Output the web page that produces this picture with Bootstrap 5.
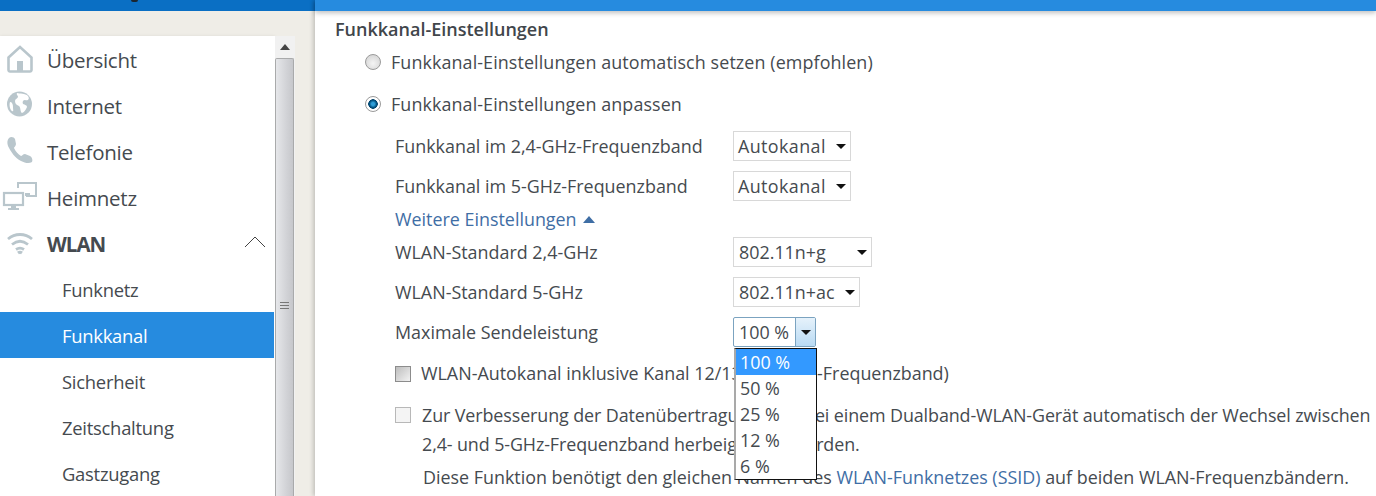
<!DOCTYPE html>
<html lang="de">
<head>
  <meta charset="UTF-8">
  <title>Funkkanal</title>
  <link href="https://cdn.jsdelivr.net/npm/bootstrap@5.3.0/dist/css/bootstrap.min.css" rel="stylesheet">
  <style>
    html, body { height: 496px; overflow: hidden; }
    body { font-family: "Open Sans", "Noto Sans", sans-serif; color: #454a4f; font-size: 17.9px; background: #fff; }
    .shell { height: 496px; }
    .side-col { width: 315px; flex: none; background: #efede7; }
    .side-top { height: 11px; background: #0a6fc4; padding-left: 131px; }
    .logo-bit { display: block; width: 7px; height: 2px; background: #1a2530; border-radius: 0 0 3px 3px; }
    .side-body { height: 485px; padding-top: 25px; }
    .side-menu { width: 275px; background: #fff; box-shadow: 0 0 3px rgba(0,0,0,.08); }
    .side-list { width: 274px; }
    .side-item { height: 46px; font-size: 20.5px; padding: 2px 0 0 47px; letter-spacing: -.25px; position: relative; }
    .side-item svg { position: absolute; left: 2px; top: 6px; width: 36px; height: 34px; }
    .side-item .up-arrow { left: 244px; top: 15px; width: 22px; height: 14px; }
    .side-item.strong-item { letter-spacing: -1px; }
    .side-sub { height: 46px; font-size: 18.4px; padding: 2px 0 0 62px; letter-spacing: -.25px; }
    .side-sub.active-sub { background: #268bdf; color: #fff; }
    .fake-scroll { width: 20px; flex: none; background: #f1f1f1; }
    .scroll-up { height: 22px; }
    .scroll-up i { border: 5px solid transparent; border-top: 0; border-bottom: 6px solid #444; }
    .scroll-thumb { width: 19px; height: 440px; border: 1px solid #a9aaab; border-bottom: 0; background: linear-gradient(90deg, #e6e7ea, #d2d3d7 60%, #c6c7cb); border-radius: 2px 2px 0 0; }
    .scroll-grip { padding-top: 243px; }
    .scroll-grip i { width: 9px; height: 9px; background: repeating-linear-gradient(#777 0 1px, transparent 1px 3px); }
    .main-col { min-width: 0; box-shadow: -2px 0 4px rgba(0,0,0,.18); }
    .main-top { height: 11px; background: #268bdf; box-shadow: 0 2px 5px rgba(0,0,0,.25); }
    .main-body { padding: 7px 0 0 20px; position: relative; white-space: nowrap; }
    .page-head { height: 22px; line-height: 22px; font-size: 18px; font-weight: 600; color: #41464b; }
    .opt-row { height: 42px; padding-left: 30px; gap: 10px; letter-spacing: .1px; }
    .opt-first { margin-top: 1px; }
    .radio-dot { width: 16px; height: 16px; border-radius: 50%; border: 1px solid #9a9a9a; background: radial-gradient(circle at 50% 60%, #f4f4f4, #cfcfcf); flex: none; }
    .radio-dot.on { background: radial-gradient(circle at 50% 50%, #2f9fd8 0 1.5px, #045483 3.5px, #03456c 4.5px, #fff 5px); }
    .set-row { height: 40px; padding-left: 60px; }
    .first-set { margin-top: 1px; }
    .set-label { width: 338px; flex: none; }
    .more-link { height: 26px; padding-left: 60px; color: #3f6ea5; gap: 6px; }
    .more-caret { border: 6px solid transparent; border-top: 0; border-bottom: 7px solid #3f6ea5; }
    .pick-box { height: 30px; padding: 0 0 0 4px; background: #fff; border: 1px solid #d8d8d8; color: #454a4f; letter-spacing: .4px; }
    .pick-box.num-box { padding-left: 5px; letter-spacing: 0; }
    .pick-caret { border: 5px solid transparent; border-bottom: 0; border-top: 5px solid #111; margin-right: 4px; }
    .w118 { width: 118px; }
    .w139 { width: 139px; }
    .w127 { width: 127px; }
    .open-box { width: 83px; height: 30px; padding: 0 0 0 5px; border: 1px solid #7ba3c0; border-radius: 2px; }
    .open-btn { width: 20px; height: 28px; border-left: 1px solid #7ba3c0; background: linear-gradient(#e6f2fb, #b9daf3); }
    .drop-list { position: absolute; left: 419px; top: 337px; width: 83px; height: 132px; background: #fff; border: 1px solid #111; border-left: 2px solid #a9a9a9; z-index: 5; }
    .drop-item { height: 26px; padding-left: 4px; }
    .drop-item.sel { background: #3399ff; color: #fff; }
    .check-row { padding-left: 60px; letter-spacing: -.1px; }
    .check-box { width: 16px; height: 16px; flex: none; border: 1px solid #8c8c8c; background: linear-gradient(135deg, #bdbdbd, #f2f2f2); margin-right: 10px; }
    .check-box.off { border-color: #b8b8b8; background: #f4f4f4; margin-right: 11px; }
    .check-one { height: 41px; margin: 1px 0 6px; letter-spacing: 0; }
    .check-two { height: 30px; }
    .line-plain { height: 29px; padding-left: 87px; letter-spacing: -.1px; }
    .line-note { height: 37px; padding-left: 88px; }
    .note-link { color: #3f6ea5; text-decoration: none; }
  </style>
</head>
<body>
  <div class="shell d-flex">
    <div class="side-col">
      <div class="side-top"><i class="logo-bit"></i></div>
      <div class="side-body">
        <div class="d-flex">
          <div class="side-menu">
            <div class="side-list">
              <div class="side-item d-flex align-items-center">
                <svg viewBox="0 0 36 34"><path d="M6.5 15.5 18 5l11.500 10.500V28a1.500 1.500 0 0 1-1.500 1.500H8A1.500 1.500 0 0 1 6.500 28z" fill="none" stroke="#b9c6cc" stroke-width="2.6"/><rect x="15" y="19" width="6" height="10" fill="#b9c6cc"/></svg>
                Übersicht
              </div>
              <div class="side-item d-flex align-items-center">
                <svg viewBox="0 0 36 34"><circle cx="17.500" cy="16" r="12.500" fill="#b9c6cc"/><path d="M15 5c3 1 8 0 11 3 2 3 0 5-3 4-2 0-3 2-2 4 2 1 4 1 4 3-1 3-4 6-5 6-2-1-1-5-3-7-3-1-4-3-4-5s2-2 3-4c0-2-2-2-1-4zM8 14c2 0 3 2 3 5s1 5-1 4-3-6-2-9z" fill="#fff"/></svg>
                Internet
              </div>
              <div class="side-item d-flex align-items-center">
                <svg viewBox="0 0 36 34"><path d="M7 4c2-2 5-1 6 1l1 5c0 2-2 3-2 4 2 4 4 6 7 8 1 0 2-2 4-2l5 2c2 1 3 4 2 6-3 2-7 1-11-1C13 24 9 18 6 12c-1-3-1-6 1-8z" fill="#b9c6cc"/></svg>
                Telefonie
              </div>
              <div class="side-item d-flex align-items-center">
                <svg viewBox="0 0 36 34"><path d="M16 8V3h18v13H24" fill="none" stroke="#b9c6cc" stroke-width="2"/><rect x="2" y="13" width="19" height="12" fill="none" stroke="#b9c6cc" stroke-width="2.200"/><path d="M9 25h5v3h3v2H6v-2h3z" fill="#b9c6cc"/><path d="M23 13h5v3h-5z" fill="#b9c6cc"/></svg>
                Heimnetz
              </div>
              <div class="side-item strong-item d-flex align-items-center fw-bold">
                <svg viewBox="0 0 36 34" fill="none" stroke="#b9c6cc" stroke-width="2.800"><path d="M6 13c7-6 17-6 24 0"/><path d="M10 18.500c5-4 11-4 16 0"/><path d="M14 23.500c3-2 5-2 8 0"/><path d="M16 27c1-.8 3-.8 4 0" stroke-width="3"/></svg>
                WLAN
                <svg class="up-arrow" viewBox="0 0 22 14" fill="none" stroke="#444" stroke-width="1"><path d="M1 12 11 2l10 10"/></svg>
              </div>
              <div class="side-sub d-flex align-items-center">Funknetz</div>
              <div class="side-sub active-sub d-flex align-items-center">Funkkanal</div>
              <div class="side-sub d-flex align-items-center">Sicherheit</div>
              <div class="side-sub d-flex align-items-center">Zeitschaltung</div>
              <div class="side-sub d-flex align-items-center">Gastzugang</div>
            </div>
          </div>
          <div class="fake-scroll">
            <div class="scroll-up d-flex align-items-center justify-content-center"><i></i></div>
            <div class="scroll-thumb"><div class="scroll-grip d-flex justify-content-center"><i></i></div></div>
          </div>
        </div>
      </div>
    </div>
    <div class="main-col flex-grow-1">
      <div class="main-top"></div>
      <div class="main-body">
        <div class="page-head">Funkkanal-Einstellungen</div>
        <div class="opt-row opt-first d-flex align-items-center"><span class="radio-dot"></span>Funkkanal-Einstellungen automatisch setzen (empfohlen)</div>
        <div class="opt-row d-flex align-items-center"><span class="radio-dot on"></span>Funkkanal-Einstellungen anpassen</div>
        <div class="set-row first-set d-flex align-items-center">
          <span class="set-label">Funkkanal im 2,4-GHz-Frequenzband</span>
          <div class="pick-box w118 d-flex align-items-center justify-content-between">Autokanal<i class="pick-caret"></i></div>
        </div>
        <div class="set-row d-flex align-items-center">
          <span class="set-label">Funkkanal im 5-GHz-Frequenzband</span>
          <div class="pick-box w118 d-flex align-items-center justify-content-between">Autokanal<i class="pick-caret"></i></div>
        </div>
        <div class="more-link d-flex align-items-center">Weitere Einstellungen<i class="more-caret"></i></div>
        <div class="set-row d-flex align-items-center">
          <span class="set-label">WLAN-Standard 2,4-GHz</span>
          <div class="pick-box num-box w139 d-flex align-items-center justify-content-between">802.11n+g<i class="pick-caret"></i></div>
        </div>
        <div class="set-row d-flex align-items-center">
          <span class="set-label">WLAN-Standard 5-GHz</span>
          <div class="pick-box num-box w127 d-flex align-items-center justify-content-between">802.11n+ac<i class="pick-caret"></i></div>
        </div>
        <div class="set-row d-flex align-items-center">
          <span class="set-label">Maximale Sendeleistung</span>
          <div class="open-box d-flex align-items-center justify-content-between">100 %<div class="open-btn d-flex align-items-center justify-content-center"><i class="pick-caret m-0"></i></div></div>
        </div>
        <div class="check-row check-one d-flex align-items-center"><span class="check-box"></span>WLAN-Autokanal inklusive Kanal 12/13 (2,4-GHz-Frequenzband)</div>
        <div class="check-row check-two d-flex align-items-center"><span class="check-box off"></span>Zur Verbesserung der Datenübertragung wird bei einem Dualband-WLAN-Gerät automatisch der Wechsel zwischen</div>
        <div class="line-plain d-flex align-items-center">2,4- und 5-GHz-Frequenzband herbeigeführt werden.</div>
        <div class="line-note d-flex align-items-center"><span>Diese Funktion benötigt den gleichen Namen des <a class="note-link" href="#">WLAN-Funknetzes (SSID)</a> auf beiden WLAN-Frequenzbändern.</span></div>
        <div class="drop-list">
          <div class="drop-item sel d-flex align-items-center">100 %</div>
          <div class="drop-item d-flex align-items-center">50 %</div>
          <div class="drop-item d-flex align-items-center">25 %</div>
          <div class="drop-item d-flex align-items-center">12 %</div>
          <div class="drop-item d-flex align-items-center">6 %</div>
        </div>
      </div>
    </div>
  </div>
  <script src="https://cdn.jsdelivr.net/npm/bootstrap@5.3.0/dist/js/bootstrap.bundle.min.js"></script>
</body>
</html>
